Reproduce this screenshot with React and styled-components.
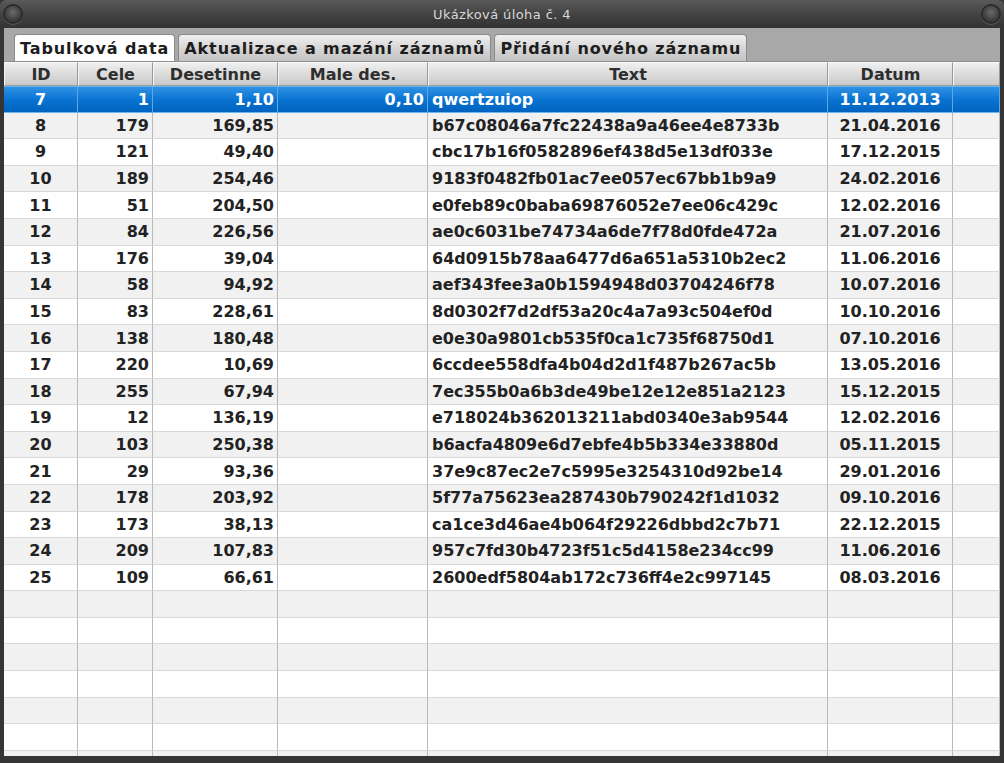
import React from "react";
import styled, { createGlobalStyle } from "styled-components";

const rows = [
  ["7", "1", "1,10", "0,10", "qwertzuiop", "11.12.2013"],
  ["8", "179", "169,85", "", "b67c08046a7fc22438a9a46ee4e8733b", "21.04.2016"],
  ["9", "121", "49,40", "", "cbc17b16f0582896ef438d5e13df033e", "17.12.2015"],
  ["10", "189", "254,46", "", "9183f0482fb01ac7ee057ec67bb1b9a9", "24.02.2016"],
  ["11", "51", "204,50", "", "e0feb89c0baba69876052e7ee06c429c", "12.02.2016"],
  ["12", "84", "226,56", "", "ae0c6031be74734a6de7f78d0fde472a", "21.07.2016"],
  ["13", "176", "39,04", "", "64d0915b78aa6477d6a651a5310b2ec2", "11.06.2016"],
  ["14", "58", "94,92", "", "aef343fee3a0b1594948d03704246f78", "10.07.2016"],
  ["15", "83", "228,61", "", "8d0302f7d2df53a20c4a7a93c504ef0d", "10.10.2016"],
  ["16", "138", "180,48", "", "e0e30a9801cb535f0ca1c735f68750d1", "07.10.2016"],
  ["17", "220", "10,69", "", "6ccdee558dfa4b04d2d1f487b267ac5b", "13.05.2016"],
  ["18", "255", "67,94", "", "7ec355b0a6b3de49be12e12e851a2123", "15.12.2015"],
  ["19", "12", "136,19", "", "e718024b362013211abd0340e3ab9544", "12.02.2016"],
  ["20", "103", "250,38", "", "b6acfa4809e6d7ebfe4b5b334e33880d", "05.11.2015"],
  ["21", "29", "93,36", "", "37e9c87ec2e7c5995e3254310d92be14", "29.01.2016"],
  ["22", "178", "203,92", "", "5f77a75623ea287430b790242f1d1032", "09.10.2016"],
  ["23", "173", "38,13", "", "ca1ce3d46ae4b064f29226dbbd2c7b71", "22.12.2015"],
  ["24", "209", "107,83", "", "957c7fd30b4723f51c5d4158e234cc99", "11.06.2016"],
  ["25", "109", "66,61", "", "2600edf5804ab172c736ff4e2c997145", "08.03.2016"],
];

const columns = [
  { title: "ID", align: "center" },
  { title: "Cele", align: "right" },
  { title: "Desetinne", align: "right" },
  { title: "Male des.", align: "right" },
  { title: "Text", align: "left" },
  { title: "Datum", align: "center" },
  { title: "", align: "left" },
];

const tabs = ["Tabulková data", "Aktualizace a mazání záznamů", "Přidání nového záznamu"];

const Global = createGlobalStyle`
  html, body { margin: 0; padding: 0; background: #2e2e2e; }
  body { font-family: "DejaVu Sans", sans-serif; }
`;

const Window = styled.div`
  width: 1004px;
  height: 763px;
  display: flex;
  flex-direction: column;
  background: #353535;
  overflow: hidden;
`;

const TitleBar = styled.div`
  height: 28px;
  flex: none;
  display: flex;
  align-items: center;
  justify-content: space-between;
  padding: 0 5px;
  background: linear-gradient(#5a5a5a, #414141 55%, #333333);
  border-radius: 6px 6px 0 0;
`;

const Knob = styled.div`
  width: 16px;
  height: 16px;
  border-radius: 50%;
  background: radial-gradient(circle at 50% 40%, #6a6a6a, #3a3a3a 70%);
  box-shadow: 0 0 0 2px #2a2a2a, 0 1px 0 2px #5a5a5a;
`;

const Title = styled.div`
  color: #d8d8d8;
  font-size: 13px;
  letter-spacing: 0.4px;
`;

const Body = styled.div`
  flex: 1;
  display: flex;
  flex-direction: column;
  margin: 0 4px 7px;
  background: #a8a8a8;
  overflow: hidden;
`;

const TabStrip = styled.div`
  height: 33px;
  flex: none;
  display: flex;
  align-items: flex-end;
  gap: 3px;
  padding-left: 10px;
  border-bottom: 1px solid #8e8e8e;
`;

const Tab = styled.div`
  height: 27px;
  box-sizing: border-box;
  display: flex;
  align-items: center;
  padding: 1px 5px 0;
  font-size: 16px;
  font-weight: bold;
  letter-spacing: 0.9px;
  color: #1d1d1d;
  border: 1px solid #8a8a8a;
  border-bottom: none;
  border-radius: 4px 4px 0 0;
  background: ${(p) => (p.$active ? "#ffffff" : "linear-gradient(#f0f0f0, #d4d4d4 55%, #c4c4c4)")};
  white-space: nowrap;
`;

const Table = styled.div`
  flex: 1;
  display: grid;
  grid-template-columns: 74px 75px 125px 150px 400px 125px 1fr;
  grid-template-rows: 24px;
  grid-auto-rows: 26.6px;
  align-content: start;
  background: #ffffff;
  overflow: hidden;
`;

const HeadCell = styled.div`
  box-sizing: border-box;
  display: flex;
  align-items: center;
  justify-content: center;
  font-size: 16px;
  font-weight: bold;
  color: #2e2e2e;
  background: linear-gradient(#efefef, #dcdcdc 50%, #c9c9c9);
  border-top: 1px solid #f8f8f8;
  border-left: 1px solid #f4f4f4;
  border-right: 1px solid #9a9a9a;
  border-bottom: 1px solid #9a9a9a;
`;

const HeadRow = styled.div`
  display: contents;
`;

const Cell = styled.div`
  box-sizing: border-box;
  display: flex;
  align-items: center;
  justify-content: ${(p) =>
    p.$align === "center" ? "center" : p.$align === "right" ? "flex-end" : "flex-start"};
  padding: 0 ${(p) => (p.$align === "left" ? "4px" : "3px")};
  font-size: 16px;
  font-weight: bold;
  color: ${(p) => (p.$selected ? "#ffffff" : "#222222")};
  white-space: nowrap;
  overflow: hidden;
  background: ${(p) =>
    p.$selected
      ? "linear-gradient(#2f92e4, #0a74d2 50%, #0062bf)"
      : p.$odd
      ? "#f1f1f1"
      : "#ffffff"};
  border-right: 1px solid ${(p) => (p.$selected ? "#5aa8e8" : "#b9b9b9")};
  border-bottom: 1px solid ${(p) => (p.$selected ? "#6ab6f0" : "#d9d9d9")};
  border-top: ${(p) => (p.$selected ? "1px solid #6ab6f0" : "none")};
`;

export default function App() {
  const empty = Array.from({ length: 8 }, () => ["", "", "", "", "", "", ""]);
  const all = [...rows.map((r) => [...r, ""]), ...empty];
  return (
    <Window>
      <Global />
      <TitleBar>
        <Knob />
        <Title>Ukázková úloha č. 4</Title>
        <Knob />
      </TitleBar>
      <Body>
        <TabStrip>
          {tabs.map((t, i) => (
            <Tab key={t} $active={i === 0}>
              {t}
            </Tab>
          ))}
        </TabStrip>
        <Table>
          <HeadRow>
            {columns.map((c, i) => (
              <HeadCell key={i}>{c.title}</HeadCell>
            ))}
          </HeadRow>
          {all.map((r, ri) => (
            <React.Fragment key={ri}>
              {r.map((v, ci) => (
                <Cell
                  key={ci}
                  $align={columns[ci].align}
                  $selected={ri === 0}
                  $odd={ri % 2 === 1}
                >
                  {v}
                </Cell>
              ))}
            </React.Fragment>
          ))}
        </Table>
      </Body>
    </Window>
  );
}
